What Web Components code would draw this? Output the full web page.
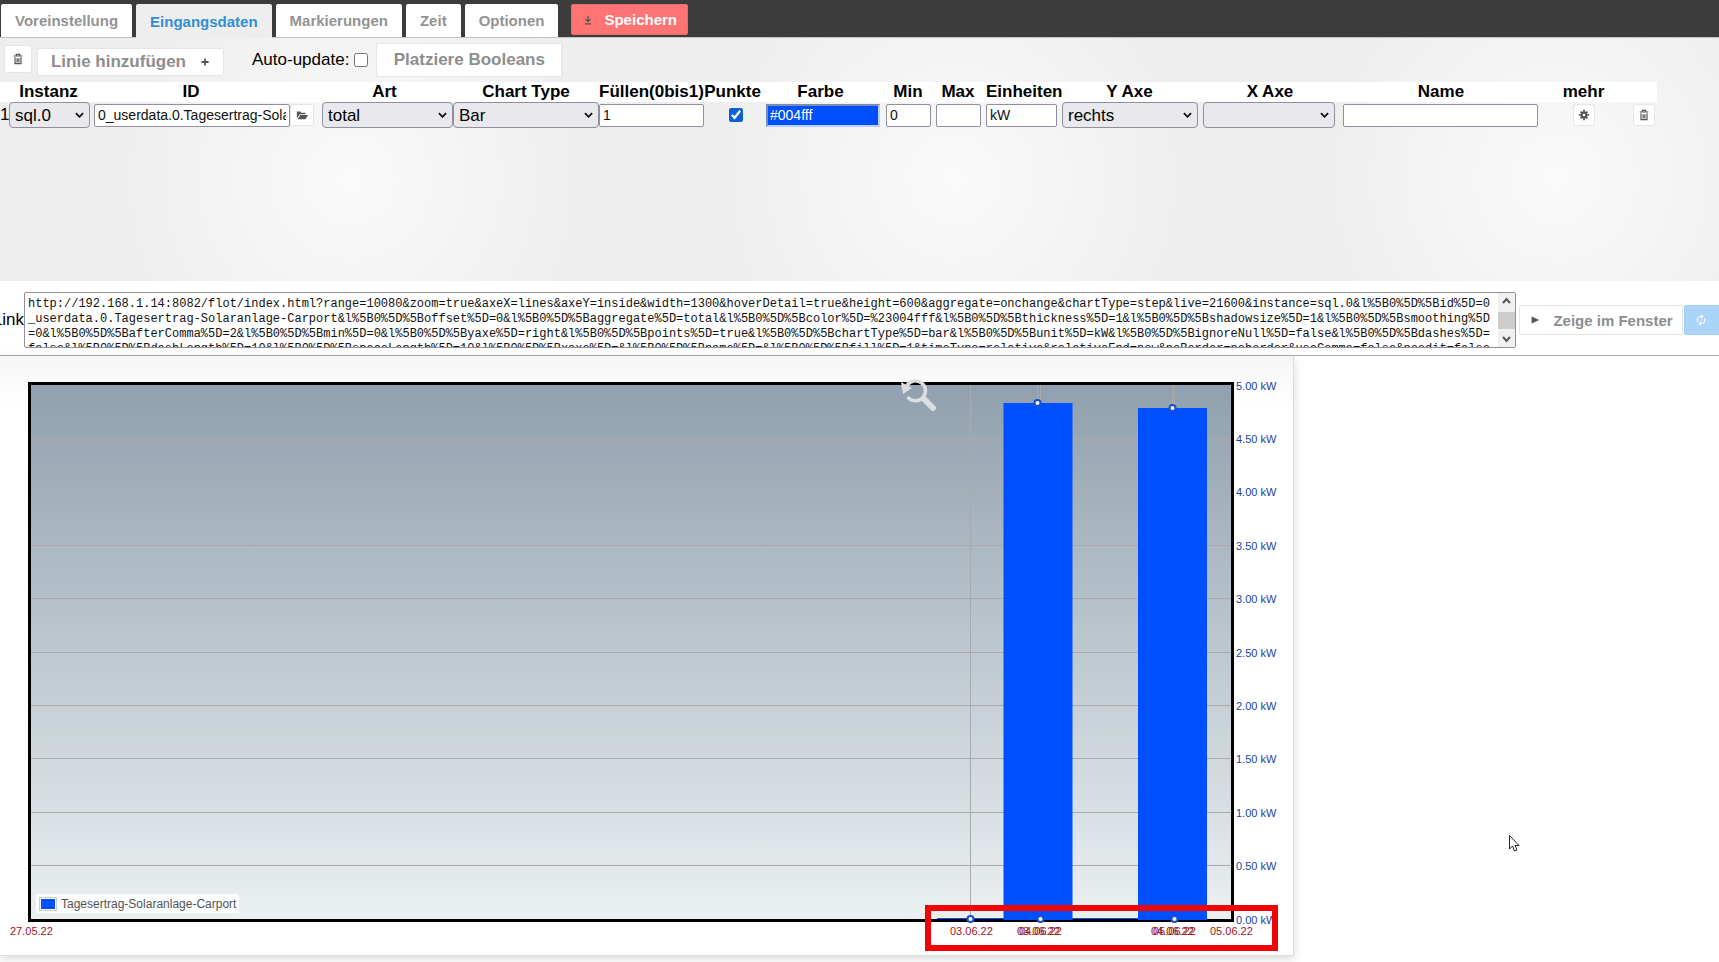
<!DOCTYPE html>
<html lang="de">
<head>
<meta charset="utf-8">
<title>Flot</title>
<style>
html, body { margin: 0; }
body { font-family: "Liberation Sans", Arial, sans-serif; font-size: 17px; color: #000; background: #fff; overflow: hidden; }
</style>
</head>
<body>
<flot-editor></flot-editor>
<script>
const ICONS = {
  trash: '<path d="M2 3.500h10M5 3.500v-2h4v2M3.500 5v7.500h7V5M6 6v5M8 6v5" fill="none" stroke="currentColor" stroke-width="1.400"/>',
  plus: '<path d="M7 2v10M2 7h10" fill="none" stroke="currentColor" stroke-width="2.500"/>',
  folder: '<path d="M1 11V3h4l1 1.500h5v1.500H4.500z" fill="currentColor"/><path d="M5 7h9l-3 5H2z" fill="currentColor"/>',
  gear: '<path d="M7 1v12M1 7h12M3 3l8 8M11 3l-8 8" stroke="currentColor" stroke-width="2"/><circle cx="7" cy="7" r="4" fill="currentColor"/><circle cx="7" cy="7" r="1.500" fill="#fff"/>',
  save: '<path d="M7 2v6M4 6l3 3 3-3M3.500 11.500h7" fill="none" stroke="currentColor" stroke-width="1.500"/>',
  play: '<path d="M3 3l9 4-9 4z" fill="currentColor"/>',
  refresh: '<path d="M3 9a4 4 0 0 1 4-6h2M11 5a4 4 0 0 1-4 6H5M7 1l2 2-2 2M7 9l-2 2 2 2M7 6.500v1.500" fill="none" stroke="currentColor" stroke-width="1.200"/>'
};

class FlotBase extends HTMLElement {
  constructor() {
    super();
    this.attachShadow({ mode: 'open' }).innerHTML = this.template();
  }
}

class FlotIcon extends HTMLElement {
  connectedCallback() {
    if (this.shadowRoot) return;
    this.attachShadow({ mode: 'open' }).innerHTML = `
      <style>:host{display:inline-flex;width:12px;height:12px;color:#555}svg{display:block;width:100%;height:100%}</style>
      <svg viewBox="0 0 14 14" aria-hidden="true">${ICONS[this.getAttribute('name')] || ''}</svg>`;
  }
}
customElements.define('flot-icon', FlotIcon);

class FlotButton extends FlotBase {
  template() {
    return `<style>
      :host{display:inline-flex;height:28px;font-size:17px;--fg:#8e8e8e;--bg:#fff;--edge:#e6e6e6;--pad:0px;--gap:0px}
      button{flex:1;display:flex;align-items:center;justify-content:center;gap:var(--gap);box-sizing:border-box;
        margin:0;padding:0 var(--pad);border:1px solid var(--edge);border-radius:2px;background:var(--bg);
        color:var(--fg);font:bold 1em "Liberation Sans",Arial,sans-serif;white-space:nowrap}
    </style><button type="button"><slot></slot></button>`;
  }
  connectedCallback() {
    const label = this.getAttribute('label');
    if (label) this.shadowRoot.querySelector('button').setAttribute('aria-label', label);
  }
}
customElements.define('flot-button', FlotButton);

class FlotTabs extends FlotBase {
  template() {
    return `<style>
      :host{display:flex;align-items:flex-end;height:38px;background:#3c3c3c;border-bottom:1px solid #c4c4c4;box-sizing:border-box;padding-left:1px}
      nav{display:flex;align-items:flex-end;gap:4px}
      a{display:flex;align-items:center;justify-content:center;height:33px;padding:0 14px;background:#fff;border-radius:2px 2px 0 0;
        font-size:15px;font-weight:bold;color:#939393;text-decoration:none;white-space:nowrap}
      a.active{background:#eee;color:#338fd4;height:34px;margin-bottom:-1px}
      flot-button{height:31px;font-size:15px;margin:0 0 2px 13px;--bg:#ff7373;--edge:#e86c6c;--fg:#fff;--pad:10px;--gap:10px}
    </style>
    <nav><a href="#v">Voreinstellung</a><a href="#e" class="active">Eingangsdaten</a><a href="#m">Markierungen</a><a href="#z">Zeit</a><a href="#o">Optionen</a></nav>
    <flot-button><flot-icon name="save"></flot-icon><span>Speichern</span></flot-button>`;
  }
}
customElements.define('flot-tabs', FlotTabs);

class FlotToolbar extends FlotBase {
  template() {
    return `<style>
      :host{display:flex;align-items:center;height:44px;padding-left:4px;box-sizing:border-box}
      .del{width:28px;margin-bottom:2px}
      .add{margin:4px 0 0 5px;width:187px;--gap:14px}
      .auto{display:flex;align-items:center;gap:5px;margin-left:28px}
      input{margin:0;width:14px;height:14px}
      .bool{margin-left:8px;width:186px;height:34px}
      .add flot-icon{width:10px;height:10px}
    </style>
    <flot-button class="del" label="Löschen"><flot-icon name="trash"></flot-icon></flot-button>
    <flot-button class="add"><span>Linie hinzufügen</span><flot-icon name="plus"></flot-icon></flot-button>
    <label class="auto">Auto-update:<input type="checkbox"></label>
    <flot-button class="bool">Platziere Booleans</flot-button>`;
  }
}
customElements.define('flot-toolbar', FlotToolbar);

class FlotLines extends FlotBase {
  template() {
    const cols = [9, 85, 228, 131, 146, 105, 57, 125, 50, 50, 76, 141, 140, 202, 77, 35];
    const sel = (v, n) => `<span class="sel"><select aria-label="${n}"><option>${v}</option></select><svg viewBox="0 0 10 6" aria-hidden="true"><path d="M1 1l4 4 4-4" fill="none" stroke="#111" stroke-width="2"/></svg></span>`;
    const inp = (v, n) => `<input type="text" value="${v}" aria-label="${n}">`;
    return `<style>
      :host{display:block}
      table{border-collapse:collapse;table-layout:fixed;width:1657px}
      th,td{padding:0}
      th{height:20px;line-height:20px;background:#fff;white-space:nowrap}
      th.gap{padding-right:6px}
      th.pick{padding-right:34px}
      td{height:26px;vertical-align:middle}
      td>div{display:flex;align-items:center}
      .sel{position:relative;display:block;flex:1}
      select{appearance:none;display:block;width:100%;height:26px;border:1px solid #8f8f9d;border-radius:4px;background:#e9e9ed;
        padding:0 5px;margin:0;color:#000;font:17px "Liberation Sans",Arial,sans-serif}
      .sel svg{position:absolute;right:6px;top:10px;width:9px;height:6px}
      input[type=text]{box-sizing:border-box;flex:1;min-width:0;height:23px;border:1px solid #8f8f9d;border-radius:2px;padding:0 3px;margin:0;
        background:#fff;color:#111;font:14px "Liberation Sans",Arial,sans-serif}
      input[type=checkbox]{width:14px;height:14px;margin:0 0 0 25px;accent-color:#0a62d6}
      .colour input[type=text]{background:#004fff;color:#fff;border:2px solid #b9d0fb;border-top-color:#7a8db5;border-left-color:#7a8db5;border-radius:0;padding:0 2px}
      flot-button{width:22px;height:22px}
      .open{width:24px}
    </style>
    <table>
      <colgroup>${cols.map(w => `<col style="width:${w}px">`).join('')}</colgroup>
      <thead><tr><th></th><th class="gap">Instanz</th><th class="pick">ID</th><th class="gap">Art</th><th>Chart Type</th><th>Füllen(0bis1)</th><th>Punkte</th><th class="gap">Farbe</th><th class="gap">Min</th><th class="gap">Max</th><th class="gap">Einheiten</th><th class="gap">Y Axe</th><th class="gap">X Axe</th><th class="gap">Name</th><th>mehr</th><th></th></tr></thead>
      <tbody><tr>
        <td>1</td>
        <td><div style="padding-right:4px">${sel('sql.0', 'Instanz')}</div></td>
        <td><div style="padding-right:8px">${inp('0_userdata.0.Tagesertrag-Solaranlage-Carport', 'ID')}<flot-button class="open" label="ID wählen"><flot-icon name="folder"></flot-icon></flot-button></div></td>
        <td><div>${sel('total', 'Art')}</div></td>
        <td><div>${sel('Bar', 'Chart Type')}</div></td>
        <td><div>${inp('1', 'Füllen')}</div></td>
        <td><div><input type="checkbox" checked aria-label="Punkte"></div></td>
        <td><div class="colour" style="padding:0 6px 0 5px">${inp('#004fff', 'Farbe')}</div></td>
        <td><div style="padding-right:5px">${inp('0', 'Min')}</div></td>
        <td><div style="padding-right:5px">${inp('', 'Max')}</div></td>
        <td><div style="padding-right:5px">${inp('kW', 'Einheiten')}</div></td>
        <td><div style="padding-right:5px">${sel('rechts', 'Y Axe')}</div></td>
        <td><div style="padding-right:8px">${sel('', 'X Axe')}</div></td>
        <td><div style="padding-right:7px">${inp('', 'Name')}</div></td>
        <td><div style="justify-content:center"><flot-button label="mehr"><flot-icon name="gear"></flot-icon></flot-button></div></td>
        <td><div style="justify-content:flex-end;padding-right:2px"><flot-button label="Zeile löschen"><flot-icon name="trash"></flot-icon></flot-button></div></td>
      </tr></tbody>
    </table>`;
  }
}
customElements.define('flot-lines', FlotLines);

class FlotLink extends FlotBase {
  template() {
    const url = 'http://192.168.1.14:8082/flot/index.html?range=10080&amp;zoom=true&amp;axeX=lines&amp;axeY=inside&amp;width=1300&amp;hoverDetail=true&amp;height=600&amp;aggregate=onchange&amp;chartType=step&amp;live=21600&amp;instance=sql.0&amp;l%5B0%5D%5Bid%5D=0_userdata.0.Tagesertrag-Solaranlage-Carport&amp;l%5B0%5D%5Boffset%5D=0&amp;l%5B0%5D%5Baggregate%5D=total&amp;l%5B0%5D%5Bcolor%5D=%23004fff&amp;l%5B0%5D%5Bthickness%5D=1&amp;l%5B0%5D%5Bshadowsize%5D=1&amp;l%5B0%5D%5Bsmoothing%5D=0&amp;l%5B0%5D%5BafterComma%5D=2&amp;l%5B0%5D%5Bmin%5D=0&amp;l%5B0%5D%5Byaxe%5D=right&amp;l%5B0%5D%5Bpoints%5D=true&amp;l%5B0%5D%5BchartType%5D=bar&amp;l%5B0%5D%5Bunit%5D=kW&amp;l%5B0%5D%5BignoreNull%5D=false&amp;l%5B0%5D%5Bdashes%5D=false&amp;l%5B0%5D%5BdashLength%5D=10&amp;l%5B0%5D%5BspaceLength%5D=10&amp;l%5B0%5D%5Bxaxe%5D=&amp;l%5B0%5D%5Bname%5D=&amp;l%5B0%5D%5Bfill%5D=1&amp;timeType=relative&amp;relativeEnd=now&amp;noBorder=noborder&amp;useComma=false&amp;noedit=false&amp;animation=0&amp;legend=sw';
    return `<style>
      :host{display:flex;align-items:center;height:75px;box-sizing:border-box;padding-top:4px;border-bottom:1px solid #aaa;background:#fff;overflow:hidden}
      label{flex:none;width:24px;display:flex;justify-content:flex-end}
      .box{flex:1;min-width:0;display:flex;height:56px;box-sizing:border-box;border:1px solid #8f8f9d;border-radius:2px;background:#fff}
      textarea{flex:1;min-width:0;resize:none;border:0;outline:0;margin:0;padding:4px 3px 0;height:54px;box-sizing:border-box;overflow:hidden;
        font:12px/15px "Liberation Mono","Courier New",monospace;word-break:break-all;color:#111;background:transparent}
      .bar{width:17px;display:flex;flex-direction:column;align-items:center;justify-content:space-between;background:#f0f0f0}
      .bar svg{width:11px;height:17px}
      .thumb{width:17px;height:17px;background:#cdcdcd}
      .show{height:30px;width:164px;margin-left:3px;font-size:15px;--gap:12px}
      .re{height:30px;width:50px;margin:0 -15px 0 1px;--bg:#aad4f8;--edge:#a0cdf5}
      .re flot-icon{color:#fff;margin-right:17px}
    </style>
    <label for="url">Link</label>
    <div class="box"><textarea id="url" spellcheck="false">${url}</textarea>
      <div class="bar"><svg viewBox="0 0 11 17"><path d="M2 10l3.500-4L9 10" fill="none" stroke="#555" stroke-width="2"/></svg><div class="thumb"></div><svg viewBox="0 0 11 17"><path d="M2 7l3.500 4L9 7" fill="none" stroke="#555" stroke-width="2"/></svg></div></div>
    <flot-button class="show"><flot-icon name="play"></flot-icon><span>Zeige im Fenster</span></flot-button>
    <flot-button class="re" label="Aktualisieren"><flot-icon name="refresh"></flot-icon></flot-button>`;
  }
}
customElements.define('flot-link', FlotLink);

/* Bar chart drawn on its own canvas; the viewBox starts at the panel's top left corner. */
class FlotChart extends FlotBase {
  template() {
    const top = 29, bottom = 563, step = 53.4;
    let grid = '', yl = '';
    for (let i = 0; i <= 10; i++) {
      const y = Math.floor(bottom - i * step);
      if (i > 0 && i < 10) grid += `<path d="M31 ${y + .5}H1231"/>`;
      yl += `<text x="1236" y="${y + 5}">${(i / 2).toFixed(2)} kW</text>`;
    }
    for (const x of [970, 1037, 1040, 1172, 1174]) grid += `<path d="M${x + .5} ${top}V${bottom}"/>`;
    const xl = [[10, '27.05.22'], [950, '03.06.22'], [1017, '03.06.22'], [1019, '04.06.22'], [1151, '04.06.22'], [1153, '05.06.22'], [1210, '05.06.22']]
      .map(([x, t]) => `<text x="${x}" y="579">${t}</text>`).join('');
    const pts = [[970, 563], [1037, 47], [1040, 563], [1172, 52], [1174, 563]]
      .map(([x, y]) => `<circle cx="${x + .5}" cy="${y}" r="3"/>`).join('');
    return `<style>
      :host{display:block;position:relative;width:1294px;height:600px;box-sizing:border-box;border:solid #ddd;border-width:0 1px 1px 0;
        background:linear-gradient(#f6f6f6 0,#fff 50px);box-shadow:0 3px 10px rgba(0,0,0,.15)}
      svg.plot{display:block;width:1293px;height:599px}
      text{font:11px "Liberation Sans",Arial,sans-serif}
      .legend{position:absolute;left:36px;bottom:42px;height:19px;display:flex;align-items:center;gap:4px;padding:0 3px;
        background:rgba(255,255,255,.85);font-size:12px;color:#545454}
      .legend i{width:14px;height:10px;background:#004fff;border:1px solid #fff;outline:1px solid #ccc;margin:0 1px}
      .mark{position:absolute;left:925px;top:549px;width:353px;height:46px;box-sizing:border-box;border:6px solid #f00505}
    </style>
    <svg class="plot" viewBox="0 0 1293 599">
      <defs><linearGradient id="bg" x1="0" y1="0" x2="0" y2="1"><stop offset="0" stop-color="#90a0ae"/><stop offset="1" stop-color="#ebf0f1"/></linearGradient></defs>
      <rect x="31" y="29" width="1200" height="534" fill="url(#bg)"/>
      <g stroke="#aaaaac" fill="none">${grid}</g>
      <rect x="29.500" y="27.500" width="1203" height="537" fill="none" stroke="#000" stroke-width="3"/>
      <path d="M937 562.500H1207" stroke="#004fff"/>
      <g fill="#004fff"><rect x="1003.500" y="47" width="69" height="517"/><rect x="1138" y="52" width="69" height="512"/></g>
      <g fill="#fff" stroke="#1450d8" stroke-width="2">${pts}</g>
      <g fill="#1c3f9e">${yl}</g><g fill="#a01525">${xl}</g>
      <g fill="none" stroke="#dcdfe2" stroke-width="3.500" stroke-linecap="round"><path d="M907 29.500a10 10 0 1 1 1.500 12.500"/><path d="M924 43l9 9" stroke-width="6"/></g>
      <path d="M901 26l2 12 9-6z" fill="#dcdfe2"/>
    </svg>
    <div class="legend"><i></i><span>Tagesertrag-Solaranlage-Carport</span></div>
    <div class="mark"></div>`;
  }
}
customElements.define('flot-chart', FlotChart);

class FlotEditor extends FlotBase {
  template() {
    return `<style>
      :host{display:block;position:relative;min-height:100vh;overflow:hidden}
      .panel{height:243px;background:radial-gradient(circle at 50% 58%,#fafafa 0,#eee 240px) 49px 0/603px 100% #eee}
      .cursor{position:absolute;left:1508px;top:834px;width:13px;height:19px}
    </style>
    <flot-tabs></flot-tabs>
    <div class="panel"><flot-toolbar></flot-toolbar><flot-lines></flot-lines></div>
    <flot-link></flot-link>
    <flot-chart></flot-chart>
    <svg class="cursor" viewBox="0 0 13 19" aria-hidden="true"><path d="M1.500 1.500v13.500l3-3 2 5 2.500-1-2-4.500h4z" fill="#fff" stroke="#222"/></svg>`;
  }
}
customElements.define('flot-editor', FlotEditor);
</script>
</body>
</html>
